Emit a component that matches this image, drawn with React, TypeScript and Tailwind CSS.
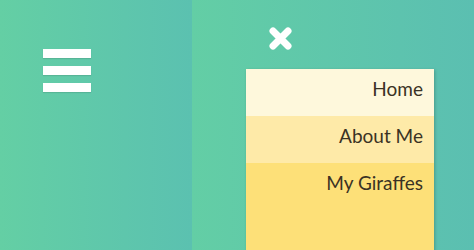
import React from 'react';

const items = ['Home', 'About Me', 'My Giraffes'];
const rowColors = ['bg-[#fef8dc]', 'bg-[#feeaa8]', 'bg-[#fde078]'];

export default function App() {
  return (
    <div className="flex h-[250px] w-[474px] overflow-hidden" style={{ fontFamily: 'Lato, "Open Sans", sans-serif' }}>
      {/* closed state */}
      <div className="w-[192px] h-full bg-gradient-to-r from-[#64cfa4] to-[#5bc1b0] pt-[49px] pl-[43px]">
        <div className="flex flex-col gap-[8px]">
          <div className="h-[9px] w-[48px] bg-white shadow-[0_1px_1px_rgba(0,0,0,0.1)]" />
          <div className="h-[9px] w-[48px] bg-white shadow-[0_1px_1px_rgba(0,0,0,0.1)]" />
          <div className="h-[9px] w-[48px] bg-white shadow-[0_1px_1px_rgba(0,0,0,0.1)]" />
        </div>
      </div>
      {/* open state */}
      <div className="flex-1 h-full bg-gradient-to-r from-[#63cea5] to-[#5bbfb1] pt-[27px] pl-[54px]">
        <svg width="23" height="23" viewBox="0 0 23 23" className="ml-[23px]">
          <path d="M4 4 L19 19 M19 4 L4 19" stroke="white" strokeWidth="7" strokeLinecap="round" />
        </svg>
        <div className="mt-[19px] w-[188px] shadow-[1px_1px_3px_rgba(0,0,0,0.2)]">
          {items.map((item, i) => (
            <div
              key={item}
              className={`${rowColors[i]} pr-[11px] pt-[6px] text-right text-[19px] leading-[28px] text-[#3a3224] ${i === 2 ? 'h-[100px]' : 'h-[47px]'}`}
            >
              {item}
            </div>
          ))}
        </div>
      </div>
    </div>
  );
}
